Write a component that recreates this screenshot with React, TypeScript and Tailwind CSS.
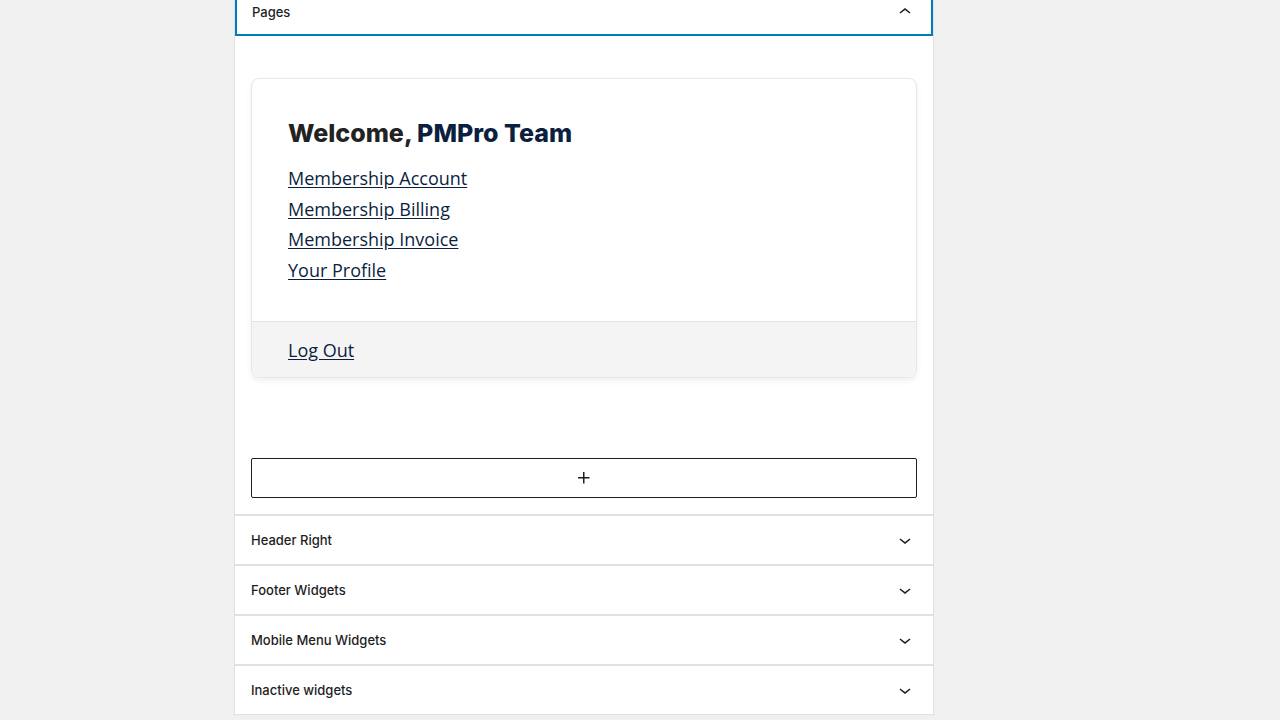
import React from "react";

const ChevronDown = () => (
  <svg width="24" height="24" viewBox="0 0 24 24" fill="#1e1e1e">
    <path d="M17.5 11.6L12 16l-5.5-4.4.9-1.2L12 14l4.6-3.6 1 1.2z" />
  </svg>
);

const ChevronUp = () => (
  <svg width="24" height="24" viewBox="0 0 24 24" fill="#1e1e1e">
    <path d="M6.5 12.4L12 8l5.5 4.4-.9 1.2L12 10l-4.6 3.6-1-1.2z" />
  </svg>
);

const Plus = () => (
  <svg width="24" height="24" viewBox="0 0 24 24" fill="#1e1e1e">
    <path d="M11 12.5V17.5H12.5V12.5H17.5V11H12.5V6H11V11H6V12.5H11Z" />
  </svg>
);

const ui = { fontFamily: "Inter, 'Liberation Sans', sans-serif" };
const body = { fontFamily: "'Open Sans', 'Liberation Sans', sans-serif" };

function Row({ title }: { title: string }) {
  return (
    <div className="flex h-[50px] items-center justify-between border-t-2 border-[#e0e0e0] pl-4 pr-4">
      <span className="mt-[2px] text-[13px] font-medium text-[#1e1e1e]" style={ui}>
        {title}
      </span>
      <ChevronDown />
    </div>
  );
}

export default function App() {
  const links = [
    "Membership Account",
    "Membership Billing",
    "Membership Invoice",
    "Your Profile",
  ];
  return (
    <div className="min-h-[720px] w-full overflow-hidden bg-[#f0f0f0]">
      <div className="-mt-[13px] ml-[234px] w-[700px] border border-[#e0e0e0] bg-white">
        <div className="flex h-[48px] items-center justify-between border-2 border-[#007cba] pl-[15px] pr-[14px]">
          <span className="mt-[2px] text-[13px] font-medium text-[#1e1e1e]" style={ui}>
            Pages
          </span>
          <ChevronUp />
        </div>
        <div className="px-4 pb-4 pt-[42px]">
          <div className="overflow-hidden rounded-lg border border-[#e3e8e8] bg-white shadow-[0_3px_6px_rgba(0,0,0,0.06)]">
            <div className="px-9 pb-9 pt-9">
              <h2
                className="text-[25px] font-extrabold leading-[36px] text-[#222222]"
                style={{ fontFamily: "Inter, 'Liberation Sans', sans-serif" }}
              >
                Welcome, <span className="text-[#0c1f3f]">PMPro Team</span>
              </h2>
              <ul className="mt-3 flex flex-col" style={body}>
                {links.map((l) => (
                  <li key={l} className="text-[18px] leading-[30.6px]">
                    <a href="#" className="text-[#0c1f3f] underline underline-offset-2">
                      {l}
                    </a>
                  </li>
                ))}
              </ul>
            </div>
            <div className="border-t border-[#dfe3e3] bg-[#f4f4f4] px-9 pb-[11px] pt-[13px]" style={body}>
              <a href="#" className="text-[18px] leading-[30.6px] text-[#0c1f3f] underline underline-offset-2">
                Log Out
              </a>
            </div>
          </div>
          <div className="mt-20 flex h-10 items-center justify-center rounded-[2px] border border-[#1e1e1e] bg-white">
            <Plus />
          </div>
        </div>
        <Row title="Header Right" />
        <Row title="Footer Widgets" />
        <Row title="Mobile Menu Widgets" />
        <Row title="Inactive widgets" />
      </div>
    </div>
  );
}
